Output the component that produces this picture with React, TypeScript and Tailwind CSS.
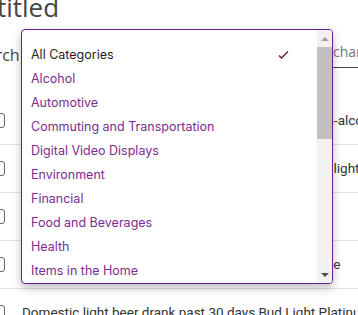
const categories = [
  "All Categories",
  "Alcohol",
  "Automotive",
  "Commuting and Transportation",
  "Digital Video Displays",
  "Environment",
  "Financial",
  "Food and Beverages",
  "Health",
  "Items in the Home",
  "Media",
  "Shopping",
];

const rows = [
  "Domestic beer drank past 30 days O'Doul's Gold non-alcoholic",
  "Domestic beer drank past 30 days Michelob Golden light",
  "Domestic beer drank past 30 days",
  "Domestic light beer drank past 30 days Bud Lite Lime",
  "Domestic light beer drank past 30 days Bud Light Platinum",
];

function Scrollbar() {
  return (
    <div className="flex w-[15px] shrink-0 flex-col bg-[#f1f1f1]">
      <div className="flex h-[17px] items-center justify-center">
        <div className="h-0 w-0 border-x-[4px] border-b-[4px] border-x-transparent border-b-[#a3a3a3]" />
      </div>
      <div className="h-[92px] bg-[#c1c1c1]" />
      <div className="flex-1" />
      <div className="flex h-[17px] items-center justify-center">
        <div className="h-0 w-0 border-x-[4px] border-t-[4px] border-x-transparent border-t-[#505050]" />
      </div>
    </div>
  );
}

function CategoryMenu() {
  return (
    <div className="absolute left-[21px] top-[29px] flex h-[255px] w-[312px] overflow-hidden rounded-[4px] border border-[#6a1b9a] bg-white shadow-[0_4px_10px_rgba(0,0,0,0.25)]">
      <ul className="flex-1 overflow-hidden pt-[13px] font-['Inter',sans-serif] text-[12.5px]">
        {categories.map((c, i) => (
          <li
            key={c}
            className={
              "flex h-[24px] items-center justify-between pl-[9px] pr-[28px] " +
              (i === 0 ? "text-[#1f1f1f]" : "text-[#7b2d91]")
            }
          >
            <span>{c}</span>
            {i === 0 && (
              <svg width="11" height="9" viewBox="0 0 11 9" className="mb-[1px]">
                <path d="M1 5.5 L3.5 8 L10 1.5" fill="none" stroke="#5a1c22" strokeWidth="1.3" />
              </svg>
            )}
          </li>
        ))}
      </ul>
      <Scrollbar />
    </div>
  );
}

export default function App() {
  return (
    <div className="relative h-[315px] w-[358px] overflow-hidden bg-white font-['Roboto',sans-serif] text-[#333]">
      <h1 className="-ml-[38px] -mt-[11px] font-['Open_Sans',sans-serif] text-[26px] leading-[36px] text-[#444]">
        Untitled
      </h1>

      <div className="-ml-[31px] mt-[10px] flex h-[40px] items-center">
        <span className="w-[52px] shrink-0 font-['Open_Sans',sans-serif] text-[16px] text-[#444]">Search</span>
        <div className="w-[312px] shrink-0" />
        <div className="flex h-[33px] w-[200px] shrink-0 items-center self-start border-b border-[#444] font-['Open_Sans',sans-serif] text-[14px] text-[#757575]">
          characteristics...
        </div>
      </div>

      <div className="-ml-[11px] mt-[21px]">
        {rows.map((r) => (
          <div
            key={r}
            className="flex h-[48px] items-center gap-[17px] border-t border-[#e0e0e0] whitespace-nowrap first:border-t-0"
          >
            <div className="h-[15px] w-[16px] shrink-0 rounded-[3px] border-[1.5px] border-[#666]" />
            <span className="text-[13.5px] text-[#333]">{r}</span>
          </div>
        ))}
      </div>

      <CategoryMenu />
    </div>
  );
}
